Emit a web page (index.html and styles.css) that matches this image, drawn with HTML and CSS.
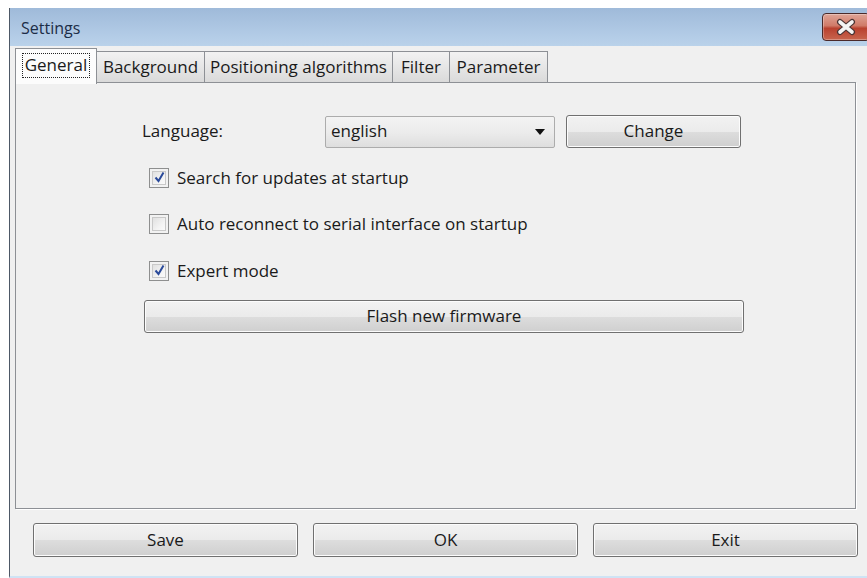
FILE: index.html
```html
<!DOCTYPE html>
<html lang="en">
<head>
<meta charset="utf-8">
<title>Settings</title>
<link rel="stylesheet" href="styles.css">
</head>
<body>
<div class="window">
  <div class="titlebar">
    <span class="title">Settings</span>
    <button class="close" aria-label="Close">
      <svg width="24" height="18" viewBox="0 0 24 18">
        <path d="M6 4 L18 14 M18 4 L6 14" stroke="#4a3434" stroke-width="6" stroke-linecap="round"/>
        <path d="M6 4 L18 14 M18 4 L6 14" stroke="#f4f4f4" stroke-width="3.6" stroke-linecap="round"/>
      </svg>
    </button>
  </div>
  <div class="client">
    <div class="tabs">
      <div class="tab selected"><span class="focus">General</span></div>
      <div class="tab t-bg">Background</div>
      <div class="tab t-pos">Positioning algorithms</div>
      <div class="tab t-filter">Filter</div>
      <div class="tab t-param">Parameter</div>
    </div>
    <div class="panel">
      <div class="form">
        <div class="lang-row">
          <span class="lang-label">Language:</span>
          <div class="combo">
            <span>english</span>
            <svg class="arrow" width="10" height="6" viewBox="0 0 10 6"><path d="M0 0 H10 L5 6 Z" fill="#111"/></svg>
          </div>
          <button class="btn change">Change</button>
        </div>
        <label class="check first">
          <span class="box checked">
            <svg width="13" height="13" viewBox="0 0 13 13"><path d="M2.5 6.5 L5.5 10 L10.5 1.5" fill="none" stroke="#2a4a9a" stroke-width="2"/></svg>
          </span>
          Search for updates at startup
        </label>
        <label class="check">
          <span class="box"></span>
          Auto reconnect to serial interface on startup
        </label>
        <label class="check third">
          <span class="box checked">
            <svg width="13" height="13" viewBox="0 0 13 13"><path d="M2.5 6.5 L5.5 10 L10.5 1.5" fill="none" stroke="#2a4a9a" stroke-width="2"/></svg>
          </span>
          Expert mode
        </label>
        <button class="btn flash">Flash new firmware</button>
      </div>
    </div>
    <div class="actions">
      <button class="btn action">Save</button>
      <button class="btn action">OK</button>
      <button class="btn action">Exit</button>
    </div>
  </div>
</div>
</body>
</html>
```

FILE: styles.css
```css
html, body {
  margin: 0;
  padding: 0;
  background: #ffffff;
  overflow: hidden;
}

body {
  width: 867px;
  height: 578px;
  font-family: "Open Sans", "Noto Sans", sans-serif;
  font-size: 17px;
  color: #1a1a1a;
}

.window {
  margin: 8px 0 0 9px;
  width: 870px;
  height: 570px;
  box-sizing: border-box;
  border-left: 1px solid #4d5866;
  border-bottom: 2px solid #cfe3f4;
  background: #f0f0f0;
  display: flex;
  flex-direction: column;
}

/* caption strip */
.titlebar {
  height: 38px;
  flex: none;
  display: flex;
  align-items: flex-start;
  background: linear-gradient(#9fbad9, #b2cbe6 70%, #bad2ea);
}

.title {
  margin: 9px 0 0 11px;
  font-size: 16px;
  color: #1c2d47;
}

.close {
  margin: 5px 9px 0 auto;
  width: 48px;
  height: 28px;
  padding: 0;
  border: 1px solid #4a2a2a;
  border-radius: 4px;
  background: linear-gradient(#dfa597, #d07a68 45%, #b9412f 55%, #c8654e);
  display: flex;
  align-items: center;
  justify-content: center;
  box-shadow: inset 0 0 0 1px rgba(255, 255, 255, 0.3);
}

.client {
  padding: 2px 0 0 5px;
  display: flex;
  flex-direction: column;
}

/* tab strip */
.tabs {
  display: flex;
  align-items: flex-end;
  height: 34px;
  position: relative;
  z-index: 1;
}

.tab {
  box-sizing: border-box;
  height: 31px;
  border: 1px solid #8d9095;
  border-bottom: none;
  border-left: none;
  background: linear-gradient(#f2f2f2, #e6e6e6 50%, #dadada);
  display: flex;
  align-items: center;
  justify-content: center;
  white-space: nowrap;
  padding-bottom: 2px;
}

.tab.selected {
  width: 82px;
  height: 36px;
  margin-bottom: -2px;
  border-left: 1px solid #8d9095;
  background: #fcfcfc;
  padding-bottom: 3px;
}

.focus {
  border: 1px dotted #222;
  padding: 0 2px 1px;
  line-height: 22px;
}

.t-bg { width: 108px; }
.t-pos { width: 188px; }
.t-filter { width: 57px; }
.t-param { width: 98px; }

/* page area under the tabs */
.panel {
  box-sizing: border-box;
  width: 841px;
  height: 427px;
  border: 1px solid #8d9095;
  background: #f0f0f0;
  box-shadow: 1px 1px 0 #ffffff;
}

.form {
  margin: 32px 0 0 128px;
  width: 600px;
  display: flex;
  flex-direction: column;
}

.lang-row {
  display: flex;
  align-items: center;
  height: 33px;
}

.lang-label {
  width: 183px;
  margin-left: -2px;
  padding-bottom: 2px;
}

.combo {
  box-sizing: border-box;
  width: 230px;
  height: 32px;
  border: 1px solid #acacac;
  border-radius: 2px;
  background: linear-gradient(#f3f3f3, #ececec 50%, #dedede);
  display: flex;
  align-items: center;
  justify-content: space-between;
  padding: 0 9px 0 5px;
}

.combo span { padding-bottom: 2px; }

.btn {
  box-sizing: border-box;
  font: inherit;
  color: #1a1a1a;
  border: 1px solid #707070;
  border-radius: 3px;
  background: linear-gradient(#f2f2f2, #ebebeb 50%, #dddddd 51%, #cfcfcf);
  box-shadow: inset 0 0 0 1px #fcfcfc;
  padding: 0 0 2px;
}

.change {
  margin-left: 11px;
  width: 175px;
  height: 33px;
}

.check {
  display: flex;
  align-items: center;
  height: 21px;
  margin-left: 5px;
  margin-top: 25px;
  white-space: nowrap;
}

.check.first { margin-top: 19px; }
.check.third { margin-top: 26px; }

.box {
  box-sizing: border-box;
  flex: none;
  width: 20px;
  height: 20px;
  margin-right: 8px;
  border: 1px solid #8e8f8f;
  background: linear-gradient(135deg, #d9d9d9, #f4f4f4 60%, #ffffff);
  box-shadow: inset 0 0 0 2px #f2f2f2, inset 0 0 0 3px #c9c9c9;
  display: flex;
  align-items: center;
  justify-content: center;
}

.flash {
  margin-top: 19px;
  width: 600px;
  height: 33px;
}

/* dialog buttons */
.actions {
  display: flex;
  gap: 15px;
  margin: 14px 0 0 18px;
}

.action {
  width: 265px;
  height: 34px;
}
```
